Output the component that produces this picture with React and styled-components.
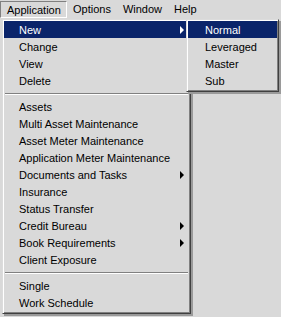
import React from 'react'
import styled, { createGlobalStyle } from 'styled-components'

const GlobalStyle = createGlobalStyle`
  html, body {
    margin: 0;
    padding: 0;
    background: #d9d9d9;
  }
  body {
    font-family: "Liberation Sans", Arial, sans-serif;
    font-size: 11px;
    color: #000;
  }
`

const mainItems = [
  { label: 'New', sub: true, active: true },
  { label: 'Change' },
  { label: 'View' },
  { label: 'Delete' },
  { sep: true },
  { label: 'Assets' },
  { label: 'Multi Asset Maintenance' },
  { label: 'Asset Meter Maintenance' },
  { label: 'Application Meter Maintenance' },
  { label: 'Documents and Tasks', sub: true },
  { label: 'Insurance' },
  { label: 'Status Transfer' },
  { label: 'Credit Bureau', sub: true },
  { label: 'Book Requirements', sub: true },
  { label: 'Client Exposure' },
  { sep: true },
  { label: 'Single' },
  { label: 'Work Schedule' },
]

const subItems = [
  { label: 'Normal', active: true },
  { label: 'Leveraged' },
  { label: 'Master' },
  { label: 'Sub' },
]

function Menu({ items, ...rest }) {
  return (
    <Dropdown {...rest}>
      {items.map((it, i) =>
        it.sep ? (
          <Separator key={i} />
        ) : (
          <Item key={i} $active={it.active}>
            <span>{it.label}</span>
            {it.sub && <Arrow $active={it.active} />}
          </Item>
        )
      )}
    </Dropdown>
  )
}

export default function App() {
  return (
    <Screen>
      <GlobalStyle />
      <MenuBar>
        <BarItem $open>Application</BarItem>
        <BarItem>Options</BarItem>
        <BarItem>Window</BarItem>
        <BarItem>Help</BarItem>
      </MenuBar>
      <Workspace />
      <Menu items={mainItems} $left={2} $width={189} />
      <Menu items={subItems} $left={186} $width={93} $pad={17} />
    </Screen>
  )
}

const Screen = styled.div`
  position: relative;
  width: 281px;
  height: 317px;
  overflow: hidden;
  background: #d9d9d9;
`

const MenuBar = styled.div`
  display: flex;
  align-items: center;
  height: 19px;
`

const BarItem = styled.div`
  height: 17px;
  line-height: 16px;
  box-sizing: border-box;
  padding: 0 6px;
  ${p =>
    p.$open &&
    `
    width: 67px;
    border: 1px solid;
    border-color: #808080 #fff #fff #808080;
  `}
`

const Workspace = styled.div`
  height: 298px;
`

const Dropdown = styled.div`
  position: absolute;
  top: 19px;
  left: ${p => p.$left}px;
  width: ${p => p.$width}px;
  box-sizing: border-box;
  background: #d9d9d9;
  border: 1px solid;
  border-color: #dcdcdc #404040 #404040 #dcdcdc;
  box-shadow: inset 1px 1px 0 #fff, inset -1px -1px 0 #808080, 2px 2px 0 #9a9a9a;
  padding: 1px 1px 2px 1px;
  --pad: ${p => p.$pad ?? 15}px;
`

const Item = styled.div`
  position: relative;
  display: flex;
  align-items: center;
  height: 17px;
  padding-left: var(--pad);
  white-space: nowrap;
  background: ${p => (p.$active ? '#0a246a' : 'transparent')};
  color: ${p => (p.$active ? '#fff' : '#000')};
`

const Arrow = styled.span`
  position: absolute;
  right: 5px;
  top: 5px;
  width: 0;
  height: 0;
  border-top: 4px solid transparent;
  border-bottom: 4px solid transparent;
  border-left: 4px solid ${p => (p.$active ? '#fff' : '#000')};
`

const Separator = styled.div`
  height: 9px;
  display: flex;
  align-items: center;
  padding: 0 1px;
  &::before {
    content: '';
    flex: 1;
    height: 0;
    border-top: 1px solid #808080;
    border-bottom: 1px solid #fff;
  }
`
